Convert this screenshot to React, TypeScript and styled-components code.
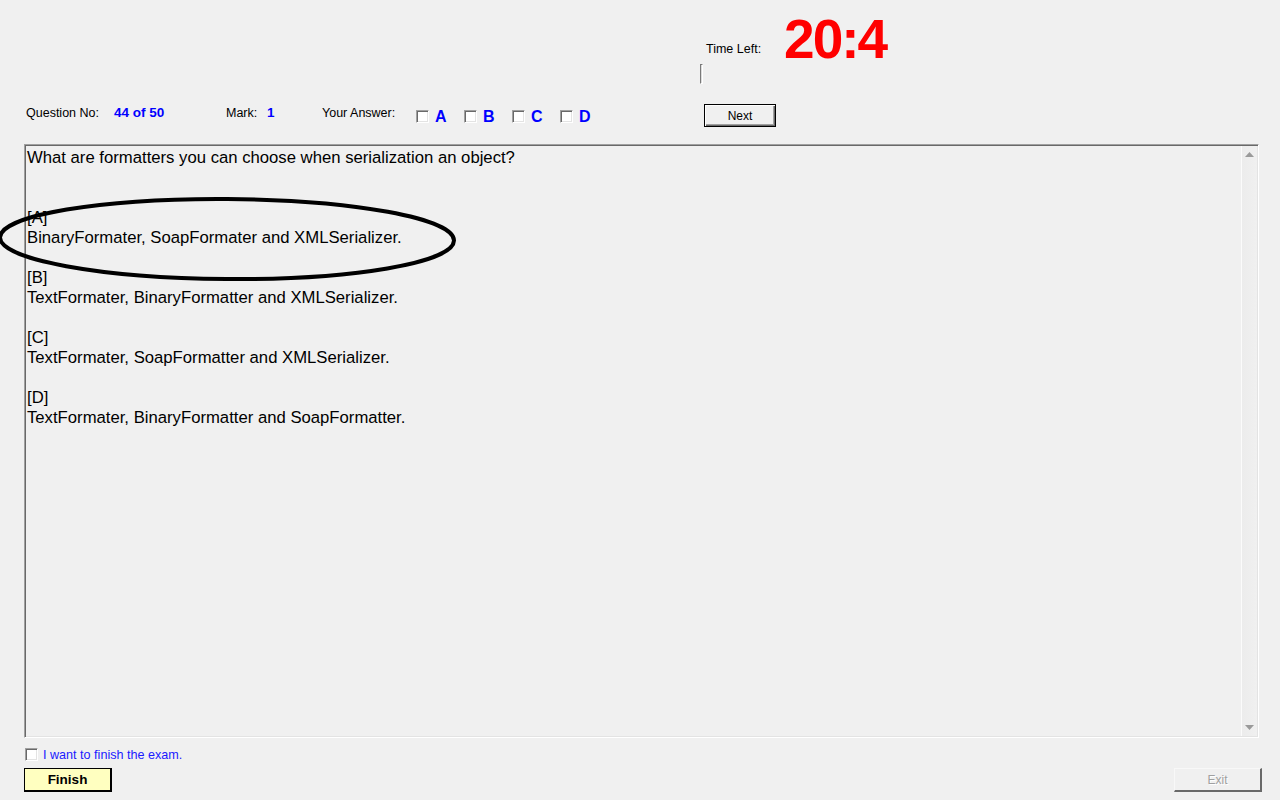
import React from "react";
import styled, { createGlobalStyle } from "styled-components";

const Global = createGlobalStyle`
  html, body { margin: 0; padding: 0; background: #f0f0f0; }
  body { font-family: "Liberation Sans", Arial, sans-serif; }
`;

const Page = styled.div`
  position: relative;
  width: 1280px;
  height: 800px;
  overflow: hidden;
  background: #f0f0f0;
  color: #000;
  font-family: "Liberation Sans", Arial, sans-serif;
`;

const Header = styled.div`
  display: flex;
  flex-direction: column;
  padding-left: 700px;
  height: 84px;
`;

const TimeRow = styled.div`
  display: flex;
  align-items: flex-start;
  height: 64px;
`;

const TimeLabel = styled.span`
  font-size: 12.5px;
  line-height: 14px;
  margin-top: 42px;
  margin-left: 6px;
`;

const TimeValue = styled.span`
  font-size: 55px;
  font-weight: bold;
  line-height: 55px;
  color: #ff0000;
  margin-top: 12px;
  margin-left: 23px;
  letter-spacing: -2px;
`;

const CaretBar = styled.div`
  width: 1px;
  height: 18px;
  border: 1px solid #7a7a7a;
  border-right-color: #fff;
  border-bottom-color: #fff;
  background: #dcdcdc;
`;

const InfoRow = styled.div`
  display: flex;
  align-items: flex-start;
  margin-top: 20px;
  padding-left: 26px;
  height: 23px;
`;

const Label = styled.span<{ $w: number }>`
  width: ${(p) => p.$w}px;
  font-size: 12.5px;
  line-height: 14px;
  margin-top: 2px;
  white-space: nowrap;
`;

const Value = styled.span<{ $w: number }>`
  width: ${(p) => p.$w}px;
  font-size: 13.5px;
  font-weight: bold;
  line-height: 14px;
  margin-top: 2px;
  color: #0000ff;
  white-space: nowrap;
`;

const Option = styled.label`
  display: flex;
  align-items: center;
  width: 48px;
  margin-top: 3px;
  height: 18px;
`;

const Box = styled.span`
  display: inline-block;
  box-sizing: border-box;
  width: 13px;
  height: 13px;
  background: #fff;
  border: 1px solid;
  border-color: #a0a0a0 #fff #fff #a0a0a0;
  box-shadow: inset 1px 1px 0 #696969, inset -1px -1px 0 #e3e3e3;
`;

const Letter = styled.span`
  margin-left: 6px;
  margin-top: 2px;
  font-size: 16px;
  font-weight: bold;
  color: #0000ff;
  line-height: 18px;
`;

const NextButton = styled.button`
  margin-left: 96px;
  width: 72px;
  height: 23px;
  box-sizing: border-box;
  padding: 0;
  background: #f0f0f0;
  border: 1px solid #000;
  box-shadow: inset 1px 1px 0 #fff, inset -1px -1px 0 #696969, inset -2px -2px 0 #a0a0a0;
  font-family: "Liberation Sans", Arial, sans-serif;
  font-size: 12px;
  color: #000;
`;

const TextArea = styled.div`
  display: flex;
  margin-top: 17px;
  margin-left: 24px;
  width: 1235px;
  height: 594px;
  box-sizing: border-box;
  border: 1px solid;
  border-color: #a0a0a0 #fff #fff #a0a0a0;
  box-shadow: inset 1px 1px 0 #696969, inset -1px -1px 0 #e3e3e3;
  background: #f0f0f0;
`;

const Content = styled.div`
  flex: 1;
  padding: 3px 2px;
  font-size: 16.7px;
  line-height: 20px;
`;

const Line = styled.div`
  height: 20px;
  white-space: nowrap;
`;

const ScrollBar = styled.div`
  width: 16px;
  margin: 1px 1px 1px 0;
  display: flex;
  flex-direction: column;
  justify-content: space-between;
  align-items: center;
  background: linear-gradient(to right, #fbfbfb 0, #fbfbfb 1px, #ececec 1px, #f0f0f0 100%);
`;

const Arrow = styled.svg`
  width: 9px;
  height: 5px;
  margin: 6px 0 6px 1px;
`;

const Bottom = styled.div`
  display: flex;
  flex-direction: column;
  padding-left: 24px;
  margin-top: 10px;
`;

const FinishCheck = styled.label`
  display: flex;
  align-items: center;
  height: 13px;
  padding-left: 1px;
`;

const FinishText = styled.span`
  margin-left: 5px;
  font-size: 12.6px;
  color: #1a1aff;
  line-height: 14px;
`;

const ButtonRow = styled.div`
  display: flex;
  justify-content: space-between;
  margin-top: 7px;
  padding-right: 18px;
`;

const FinishButton = styled.button`
  width: 88px;
  height: 24px;
  box-sizing: border-box;
  padding: 0;
  background: #ffffc0;
  border: 1px solid #000;
  border-right-width: 2px;
  border-bottom-width: 2px;
  font-family: "Liberation Sans", Arial, sans-serif;
  font-size: 13.5px;
  font-weight: bold;
  color: #000;
`;

const ExitButton = styled.button`
  width: 88px;
  height: 24px;
  box-sizing: border-box;
  padding: 0;
  background: #f0f0f0;
  border: 1px solid;
  border-color: #f8f8f8 #696969 #696969 #f8f8f8;
  border-right-width: 2px;
  border-bottom-width: 2px;
  font-family: "Liberation Sans", Arial, sans-serif;
  font-size: 12px;
  color: #a0a0a0;
  text-shadow: 1px 1px 0 #fff;
`;

const Overlay = styled.svg`
  position: absolute;
  left: 0;
  top: 0;
  pointer-events: none;
`;

const lines = [
  "What are formatters you can choose when serialization an object?",
  "",
  "",
  "[A]",
  "BinaryFormater, SoapFormater and XMLSerializer.",
  "",
  "[B]",
  "TextFormater, BinaryFormatter and XMLSerializer.",
  "",
  "[C]",
  "TextFormater, SoapFormatter and XMLSerializer.",
  "",
  "[D]",
  "TextFormater, BinaryFormatter and SoapFormatter.",
];

export default function App() {
  return (
    <Page>
      <Global />
      <Header>
        <TimeRow>
          <TimeLabel>Time Left:</TimeLabel>
          <TimeValue>20:4</TimeValue>
        </TimeRow>
        <CaretBar />
      </Header>
      <InfoRow>
        <Label $w={88}>Question No:</Label>
        <Value $w={112}>44 of 50</Value>
        <Label $w={41}>Mark:</Label>
        <Value $w={55}>1</Value>
        <Label $w={94}>Your Answer:</Label>
        {["A", "B", "C", "D"].map((l) => (
          <Option key={l}>
            <Box />
            <Letter>{l}</Letter>
          </Option>
        ))}
        <NextButton>Next</NextButton>
      </InfoRow>
      <TextArea>
        <Content>
          {lines.map((t, i) => (
            <Line key={i}>{t}</Line>
          ))}
        </Content>
        <ScrollBar>
          <Arrow viewBox="0 0 9 5">
            <path d="M4.5 0 L9 5 L0 5 Z" fill="#9a9a9a" />
          </Arrow>
          <Arrow viewBox="0 0 9 5">
            <path d="M0 0 L9 0 L4.5 5 Z" fill="#9a9a9a" />
          </Arrow>
        </ScrollBar>
      </TextArea>
      <Bottom>
        <FinishCheck>
          <Box />
          <FinishText>I want to finish the exam.</FinishText>
        </FinishCheck>
        <ButtonRow>
          <FinishButton>Finish</FinishButton>
          <ExitButton disabled>Exit</ExitButton>
        </ButtonRow>
      </Bottom>
      <Overlay width="1280" height="800" viewBox="0 0 1280 800">
        <ellipse
          cx="227"
          cy="239"
          rx="227"
          ry="40"
          fill="none"
          stroke="#000"
          strokeWidth="4"
          transform="rotate(0.4 227 239)"
        />
      </Overlay>
    </Page>
  );
}
